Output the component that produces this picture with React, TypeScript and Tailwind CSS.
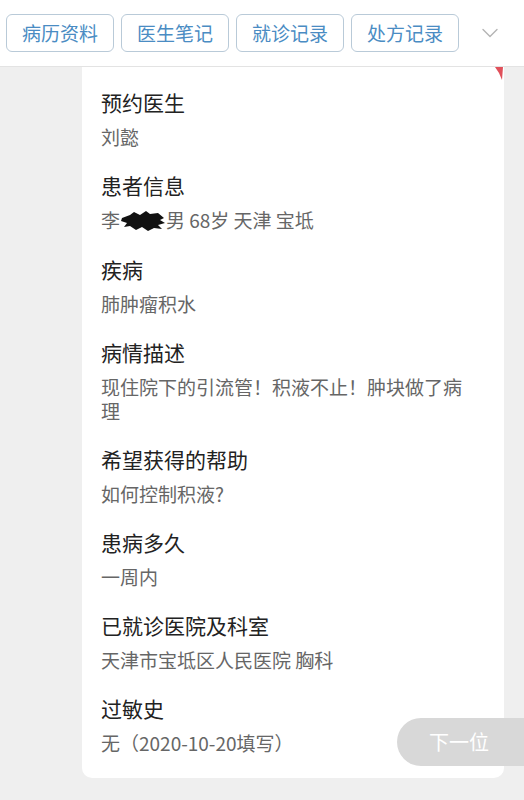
import { ChevronDown } from "lucide-react";

const tabs = ["病历资料", "医生笔记", "就诊记录", "处方记录"];

type Item = { title: string; value: React.ReactNode };

// 涂抹遮挡的患者姓名
function Redact() {
  return (
    <svg width="46" height="24" viewBox="0 0 46 24" className="inline-block align-[-5px]">
      <path
        d="M2 9 L10 6 L14 3 L20 6 L26 2 L30 5 L38 4 L44 9 L40 11 L45 14 L38 16 L42 20 L34 19 L28 22 L22 18 L16 21 L10 17 L4 18 L7 14 L1 12 Z"
        fill="#111"
      />
    </svg>
  );
}

const items: Item[] = [
  { title: "预约医生", value: "刘懿" },
  {
    title: "患者信息",
    value: (
      <>
        李<Redact />男 68岁 天津 宝坻
      </>
    ),
  },
  { title: "疾病", value: "肺肿瘤积水" },
  { title: "病情描述", value: "现住院下的引流管！积液不止！肿块做了病理" },
  { title: "希望获得的帮助", value: "如何控制积液?" },
  { title: "患病多久", value: "一周内" },
  { title: "已就诊医院及科室", value: "天津市宝坻区人民医院 胸科" },
  { title: "过敏史", value: "无（2020-10-20填写）" },
];

export default function App() {
  return (
    <div
      className="relative h-[800px] w-[524px] overflow-hidden bg-[#efefef]"
      style={{ fontFamily: '"Noto Sans CJK SC", "Noto Sans", sans-serif' }}
    >
      <div className="flex h-[67px] items-center gap-[7px] border-b border-[#e3e3e3] bg-white pl-[6px]">
        {tabs.map((t) => (
          <div
            key={t}
            className="flex h-[38px] w-[108px] items-center justify-center rounded-[6px] border border-[#b9cad8] text-[19px] text-[#4a8cc3]"
          >
            {t}
          </div>
        ))}
        <div className="ml-auto mr-[20px] text-[#b4b4b4]">
          <ChevronDown size={28} strokeWidth={1.2} />
        </div>
      </div>

      <div className="relative ml-[82px] w-[422px] rounded-b-[10px] bg-white pb-[23px] pl-[19px] pr-[24px] pt-[21px]">
        <svg width="8" height="14" viewBox="0 0 8 14" className="absolute right-[1px] top-0">
          <path d="M0 0 L8 0 L7 13 L4 6 Z" fill="#e0505a" />
        </svg>
        <div className="flex flex-col gap-[22px]">
          {items.map((it) => (
            <div key={it.title}>
              <div className="text-[21px] leading-[28px] text-[#222]">{it.title}</div>
              <div className="mt-[9px] text-[19px] leading-[24px] text-[#666]">{it.value}</div>
            </div>
          ))}
        </div>
      </div>

      <div className="absolute left-[397px] top-[718px] flex h-[48px] w-[150px] items-center rounded-l-full bg-[#d8d8d8] pl-[32px] text-[20px] text-white">
        下一位
      </div>
    </div>
  );
}
